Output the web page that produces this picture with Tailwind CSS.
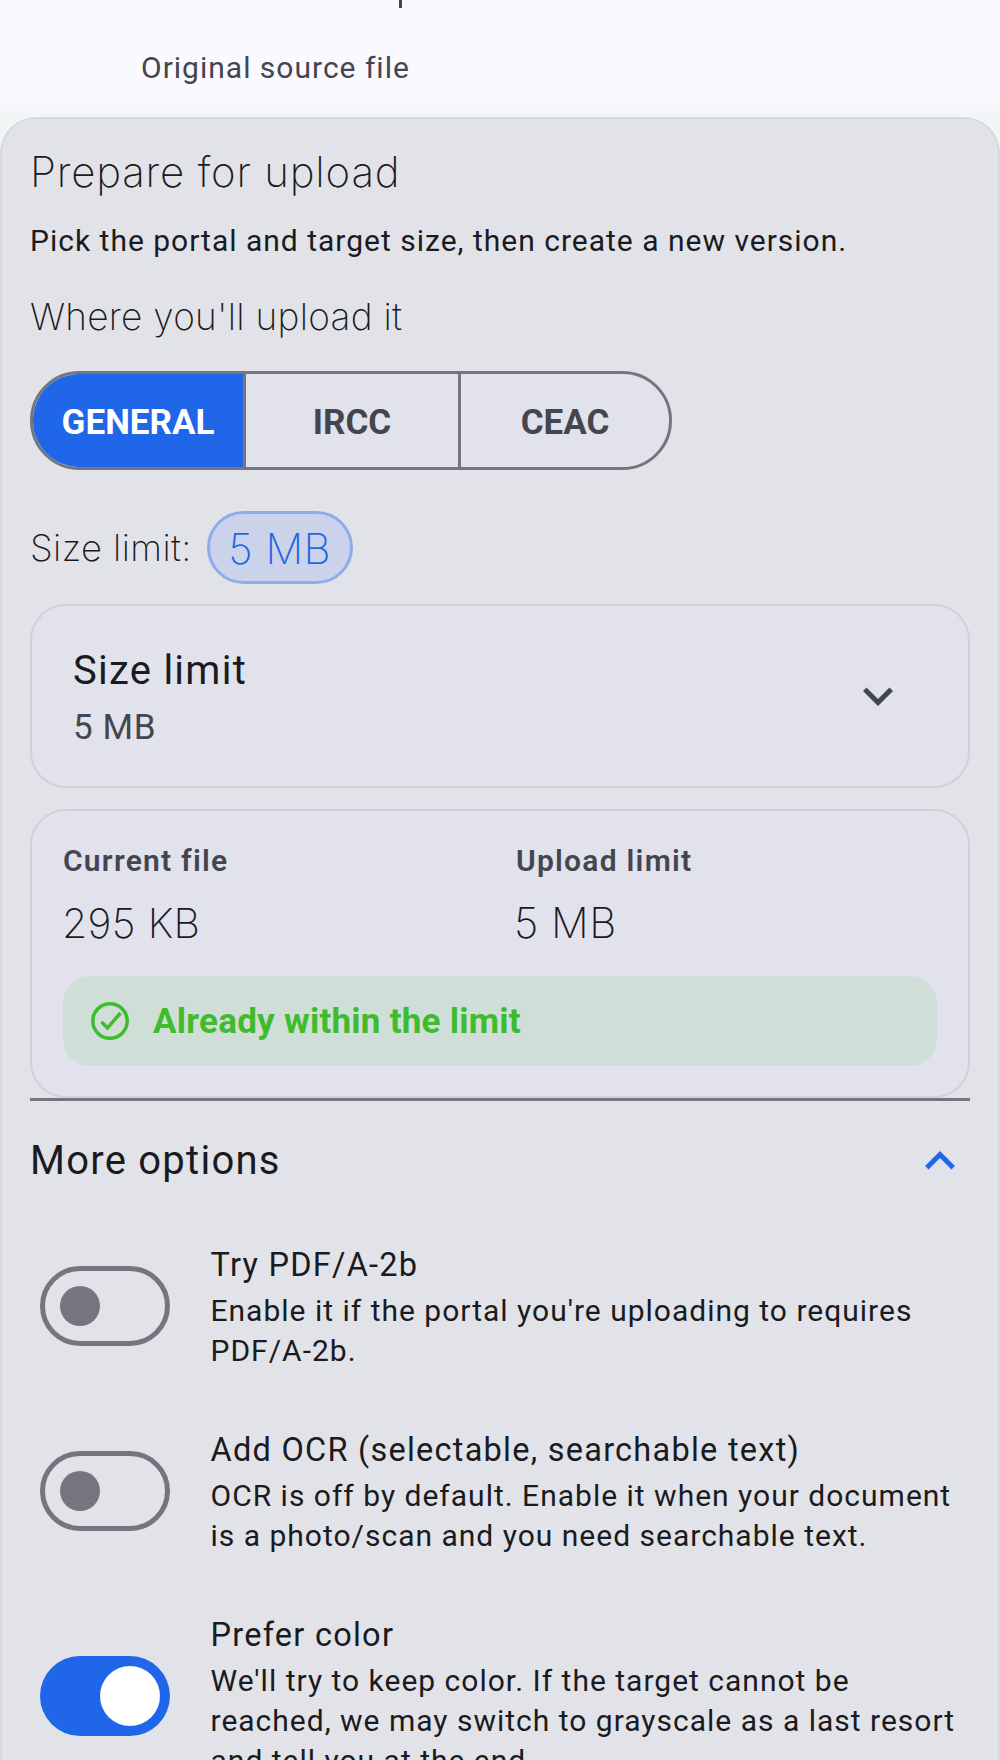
<!DOCTYPE html>
<html lang="en">
<head>
  <meta charset="UTF-8">
  <meta name="viewport" content="width=device-width, initial-scale=1.0">
  <title>Prepare for upload</title>
  <script src="https://cdn.jsdelivr.net/npm/@tailwindcss/browser@4"></script>
</head>
<body class="bg-[#f3f6f6] font-['Roboto',sans-serif] text-[#1a1b21] h-[1760px] overflow-hidden">

  <!-- Source file strip -->
  <div class="bg-[#f9f9ff] h-[105px]">
    <div class="ml-[399px] w-[3px] h-2 bg-[#44464f]"></div>
    <p class="ml-[141px] mt-[40px] text-[30px] leading-[40px] tracking-[1px] text-[#44464f]">Original source file</p>
  </div>

  <!-- Prepare card -->
  <section class="mt-3 h-[1700px] bg-[#e2e3e8] border-2 border-[#d8d9df] rounded-t-[36px] px-[28px] pt-[28px]">
    <h2 class="font-['Inter',sans-serif] font-[250] text-[42px] leading-[50px] tracking-[0.8px]">Prepare for upload</h2>
    <p class="mt-[24px] text-[30px] leading-[40px] tracking-[1px]">Pick the portal and target size, then create a new version.</p>
    <h3 class="mt-[31px] font-['Inter',sans-serif] font-[250] text-[37px] leading-[50px] tracking-[0.25px]">Where you'll upload it</h3>

    <!-- Portal picker -->
    <div class="mt-[29px] flex w-[642px] h-[99px] rounded-full border-[3px] border-[#74757f] overflow-hidden bg-[#e1e2ec] text-[35px] font-bold">
      <div class="w-[210px] pt-[5px] bg-[#1f66e8] text-white flex items-center justify-center">GENERAL</div>
      <div class="w-[215px] pt-[5px] border-l-[3px] border-[#74757f] text-[#44464f] flex items-center justify-center">IRCC</div>
      <div class="flex-1 pt-[5px] border-l-[3px] border-[#74757f] text-[#44464f] flex items-center justify-center">CEAC</div>
    </div>

    <div class="mt-[41px] flex items-center gap-[15px] h-[73px]">
      <span class="pt-[2px] font-['Inter',sans-serif] font-[250] text-[36.5px] tracking-[0.4px]">Size limit:</span>
      <span class="pt-[1px] h-[73px] w-[146px] rounded-full bg-[#cad3e9] border-[3px] border-[#8dace9] text-[#1f66e8] font-['Inter',sans-serif] font-[250] text-[42px] tracking-[0.5px] flex items-center justify-center">5 MB</span>
    </div>

    <!-- Size limit dropdown -->
    <div class="mt-[20px] h-[184px] rounded-[36px] bg-[#e1e2ec] border-[2.5px] border-[#cfd0d9] flex items-center justify-between pl-[41px] pr-[60px]">
      <div class="pt-[1px]">
        <div class="text-[40px] leading-[50px] tracking-[1.25px]">Size limit</div>
        <div class="mt-[12px] text-[35px] leading-[40px] tracking-[0.6px] text-[#44464f]">5 MB</div>
      </div>
      <svg class="w-[60px] h-[60px] fill-[#44464f]" viewBox="0 0 24 24"><path d="M16.59 8.59 12 13.17 7.41 8.59 6 10l6 6 6-6z"/></svg>
    </div>

    <!-- Sizes -->
    <div class="mt-[21px] h-[289px] rounded-[36px] bg-[#e1e2ec] border-[2.5px] border-[#cfd0d9] px-[31px] pt-[30px]">
      <div class="grid grid-cols-[453px_1fr]">
        <div>
          <div class="text-[30px] leading-[40px] font-semibold tracking-[1.25px] text-[#44464f]">Current file</div>
          <div class="mt-[17px] -ml-[1px] font-['Inter',sans-serif] font-[250] text-[41px] leading-[50px] tracking-[0.3px]">295 KB</div>
        </div>
        <div>
          <div class="text-[30px] leading-[40px] font-semibold tracking-[1.25px] text-[#44464f]">Upload limit</div>
          <div class="mt-[17px] -ml-[2px] font-['Inter',sans-serif] font-[250] text-[42px] leading-[50px] tracking-[0.5px]">5 MB</div>
        </div>
      </div>
      <div class="mt-[28px] h-[90px] rounded-[27px] bg-[#cfded7] flex items-center pl-[28px] gap-[24px] text-[#3fbb2e] text-[35px] tracking-[0.25px] font-bold">
        <svg class="w-[38px] h-[38px] shrink-0" viewBox="0 0 38 38" fill="none" stroke="currentColor" stroke-width="3.5"><circle cx="19" cy="19" r="17.2"/><path d="M10.5 20l6 6 13-15"/></svg>
        <span class="pt-[2px]">Already within the limit</span>
      </div>
    </div>

    <!-- More options -->
    <div class="h-[2.5px] bg-[#74757f]"></div>
    <div class="mt-[35px] flex items-center justify-between h-[50px]">
      <span class="text-[40px] leading-[50px] tracking-[1.25px]">More options</span>
      <svg class="w-[60px] h-[60px] fill-[#1f66e8]" viewBox="0 0 24 24"><path d="M12 8l-6 6 1.41 1.41L12 10.83l4.59 4.58L18 14z"/></svg>
    </div>

    <div class="mt-[54px] flex flex-col gap-[53px]">
      <div class="flex items-center">
        <div class="ml-[10px] shrink-0 w-[130px] h-[80px] rounded-full border-[5px] border-[#74757f] flex items-center pl-[15px]">
          <div class="w-[40px] h-[40px] rounded-full bg-[#74757f]"></div>
        </div>
        <div class="ml-[40.5px]">
          <div class="text-[32.5px] leading-[50px] tracking-[1.25px]">Try PDF/A-2b</div>
          <div class="mt-[1px] text-[30px] leading-[40px] tracking-[1px] pb-[1px]">Enable it if the portal you're uploading to requires<br>PDF/A-2b.</div>
        </div>
      </div>
      <div class="flex items-center">
        <div class="ml-[10px] shrink-0 w-[130px] h-[80px] rounded-full border-[5px] border-[#74757f] flex items-center pl-[15px]">
          <div class="w-[40px] h-[40px] rounded-full bg-[#74757f]"></div>
        </div>
        <div class="ml-[40.5px]">
          <div class="text-[32.5px] leading-[50px] tracking-[1.25px]">Add OCR (selectable, searchable text)</div>
          <div class="mt-[1px] text-[30px] leading-[40px] tracking-[1px] pb-[1px]">OCR is off by default. Enable it when your document<br>is a photo/scan and you need searchable text.</div>
        </div>
      </div>
      <div class="flex items-center">
        <div class="ml-[10px] shrink-0 w-[130px] h-[80px] rounded-full bg-[#1f66e8] flex items-center justify-end pr-[10px]">
          <div class="w-[60px] h-[60px] rounded-full bg-white"></div>
        </div>
        <div class="ml-[40.5px]">
          <div class="text-[32.5px] leading-[50px] tracking-[1.25px]">Prefer color</div>
          <div class="mt-[1px] text-[30px] leading-[40px] tracking-[1px] pb-[1px]">We'll try to keep color. If the target cannot be<br>reached, we may switch to grayscale as a last resort<br>and tell you at the end.</div>
        </div>
      </div>
    </div>
  </section>
</body>
</html>
